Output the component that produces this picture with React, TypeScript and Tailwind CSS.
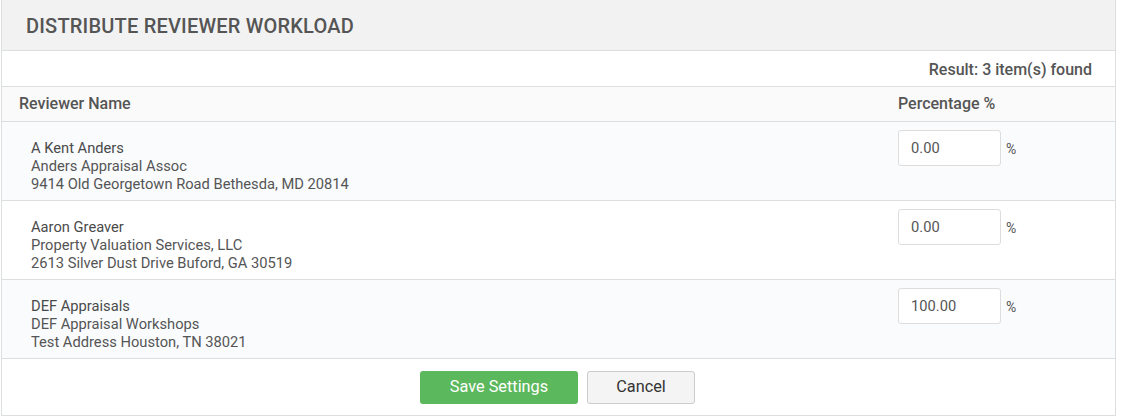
import React, { useState } from 'react';

type Reviewer = {
  id: number;
  name: string;
  company: string;
  address: string;
  percent: string;
};

const initialReviewers: Reviewer[] = [
  { id: 1, name: 'A Kent Anders', company: 'Anders Appraisal Assoc', address: '9414 Old Georgetown Road Bethesda, MD 20814', percent: '0.00' },
  { id: 2, name: 'Aaron Greaver', company: 'Property Valuation Services, LLC', address: '2613 Silver Dust Drive Buford, GA 30519', percent: '0.00' },
  { id: 3, name: 'DEF Appraisals', company: 'DEF Appraisal Workshops', address: 'Test Address Houston, TN 38021', percent: '100.00' },
];

export default function App() {
  const [reviewers, setReviewers] = useState(initialReviewers);

  const updatePercent = (id: number, value: string) =>
    setReviewers((list) => list.map((r) => (r.id === id ? { ...r, percent: value } : r)));

  return (
    <div className="bg-white font-['Roboto',sans-serif] text-[#555]">
      <div className="ml-px w-[1115px] border border-t-0 border-[#dcdfe0]">
        <div className="h-[51px] bg-[#f2f2f2] border-b border-[#dcdfe0] flex items-center pl-6 pt-[2px]">
          <h1 className="text-[20px] font-medium uppercase tracking-[0.2px] text-[#555]">
            Distribute Reviewer Workload
          </h1>
        </div>

        <div className="h-[36px] border-b border-[#dcdfe0] flex items-end justify-end pr-[23px] pb-[4px]">
          <span className="text-[16px] font-medium text-[#555]">Result: {reviewers.length} item(s) found</span>
        </div>

        <div className="h-[35px] bg-[#fafafa] border-b border-[#dcdfe0] flex items-center text-[16px] font-medium">
          <div className="w-[896px] pl-[17px]">Reviewer Name</div>
          <div className="flex-1">Percentage %</div>
        </div>

        {reviewers.map((r, i) => (
          <div
            key={r.id}
            className={`h-[79px] border-b border-[#dcdfe0] flex ${i % 2 === 1 ? 'bg-white' : 'bg-[#f9fbfd]'}`}
          >
            <div className="w-[896px] pl-[29px] pt-[17px] text-[14.7px] leading-[18px]">
              <div className="text-[#4a4a4a]">{r.name}</div>
              <div>{r.company}</div>
              <div>{r.address}</div>
            </div>
            <div className="flex-1 pt-2 flex items-start">
              <input
                value={r.percent}
                onChange={(e) => updatePercent(r.id, e.target.value)}
                className="w-[103px] h-[36px] bg-white border border-[#dddddd] rounded-[3px] px-3 text-[14.7px] text-[#555] outline-none"
              />
              <span className="ml-[5px] mt-[9px] text-[14px]">%</span>
            </div>
          </div>
        ))}

        <div className="h-[56px] flex justify-center gap-[9px] pt-[12px] pr-[2px]">
          <button className="w-[158px] h-[33px] rounded-[3px] bg-[#5cb85c] text-white text-[16.3px]">
            Save Settings
          </button>
          <button className="w-[108px] h-[33px] rounded-[3px] bg-[#f4f4f4] border border-[#cccccc] text-[#333] text-[16.3px]">
            Cancel
          </button>
        </div>
      </div>
    </div>
  );
}
